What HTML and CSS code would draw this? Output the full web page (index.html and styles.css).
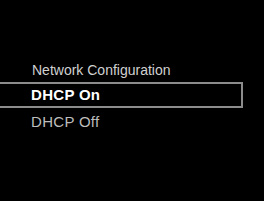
FILE: index.html
```html
<!DOCTYPE html>
<html lang="en">
<head>
    <meta charset="UTF-8">
    <meta name="viewport" content="width=device-width, initial-scale=1.0">
    <title>Network Configuration</title>
    <link rel="stylesheet" href="styles.css">
</head>
<body>
    <div class="menu">
        <div class="menu-title">Network Configuration</div>
        <div class="menu-item selected">DHCP On</div>
        <div class="menu-item">DHCP Off</div>
    </div>
</body>
</html>
```

FILE: styles.css
```css
html, body {
    margin: 0;
    padding: 0;
    background-color: #000;
    height: 100%;
}
body {
    font-family: "Liberation Sans", Arial, sans-serif;
    font-size: 14px;
    overflow: hidden;
}
.menu {
    padding-top: 59px;
}
.menu-title {
    height: 23px;
    line-height: 22px;
    padding-left: 32px;
    color: #d0d0d0;
}
.menu-item {
    width: 210px;
    height: 22px;
    line-height: 22px;
    padding-left: 31px;
    margin-bottom: 1px;
    font-size: 15px;
    letter-spacing: 0.3px;
    color: #bdbdbd;
    border: 2px solid transparent;
    border-left: none;
}
.menu-item.selected {
    color: #fff;
    font-weight: bold;
    border-color: #8c8c8c;
}
```
